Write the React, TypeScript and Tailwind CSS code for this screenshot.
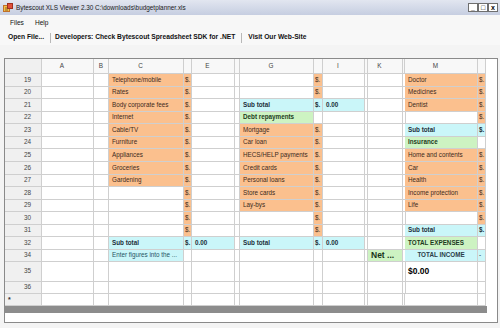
import React from "react";

type Cell = { t?: string; k?: "o" | "c" | "g"; b?: boolean; x?: string };
type Row = { n: string; h: string; cells: Record<string, Cell> };

const COLS = ["A", "B", "C", "D", "E", "F", "G", "H", "I", "J", "K", "L", "M", "N"];
const NARROW = ["D", "F", "H", "J", "L", "N"];
const GRID =
  "grid grid-cols-[37px_52px_15px_75px_8px_43px_5px_74px_9px_42px_3px_35px_2px_73px_8px]";

const o = (t = ""): Cell => ({ t, k: "o" });
const cb = (t = ""): Cell => ({ t, k: "c", b: true });
const gb = (t = ""): Cell => ({ t, k: "g", b: true });
const d = o("$.");

const tone = {
  o: "bg-[#fbc08e] text-[#3b2a1c]",
  c: "bg-[#caf6f9] text-[#1c2f3a]",
  g: "bg-[#cdf3c2] text-[#1c3a1c]",
};

const rows: Row[] = [
  { n: "19", h: "h-[12.57px]", cells: { C: o("Telephone/mobile"), D: d, H: d, M: o("Doctor"), N: d } },
  { n: "20", h: "h-[12.57px]", cells: { C: o("Rates"), D: d, H: d, M: o("Medicines"), N: d } },
  {
    n: "21",
    h: "h-[12.57px]",
    cells: { C: o("Body corporate fees"), D: d, G: cb("Sub total"), H: cb("$."), I: cb("0.00"), M: o("Dentist"), N: d },
  },
  { n: "22", h: "h-[12.57px]", cells: { C: o("Internet"), D: d, G: gb("Debt repayments"), N: d } },
  {
    n: "23",
    h: "h-[12.57px]",
    cells: { C: o("Cable/TV"), D: d, G: o("Mortgage"), H: d, M: cb("Sub total"), N: cb("$.") },
  },
  { n: "24", h: "h-[12.57px]", cells: { C: o("Furniture"), D: d, G: o("Car loan"), H: d, M: gb("Insurance") } },
  {
    n: "25",
    h: "h-[12.57px]",
    cells: { C: o("Appliances"), D: d, G: o("HECS/HELP payments"), H: d, M: o("Home and contents"), N: d },
  },
  { n: "26", h: "h-[12.57px]", cells: { C: o("Groceries"), D: d, G: o("Credit cards"), H: d, M: o("Car"), N: d } },
  { n: "27", h: "h-[12.57px]", cells: { C: o("Gardening"), D: d, G: o("Personal loans"), H: d, M: o("Health"), N: d } },
  { n: "28", h: "h-[12.57px]", cells: { D: d, G: o("Store cards"), H: d, M: o("Income protection"), N: d } },
  { n: "29", h: "h-[12.57px]", cells: { D: d, G: o("Lay-bys"), H: d, M: o("Life"), N: d } },
  { n: "30", h: "h-[12.57px]", cells: { D: d, H: d, N: d } },
  { n: "31", h: "h-[12.57px]", cells: { D: d, H: d, M: cb("Sub total"), N: cb("$.") } },
  {
    n: "32",
    h: "h-[12.57px]",
    cells: {
      C: cb("Sub total"),
      D: cb("$."),
      E: cb("0.00"),
      G: cb("Sub total"),
      H: cb("$."),
      I: cb("0.00"),
      M: gb("TOTAL EXPENSES"),
    },
  },
  {
    n: "34",
    h: "h-[12px]",
    cells: {
      C: { t: "Enter figures into the ...", k: "c", x: "text-[#1f5464]" },
      K: { t: "Net ...", k: "g", b: true, x: "text-[8.5px] text-[#173317]" },
      M: { t: "TOTAL INCOME", k: "c", b: true, x: "justify-center text-[#2a3d48]" },
      N: { t: "-", k: "c" },
    },
  },
  { n: "35", h: "h-[20px]", cells: { M: { t: "$0.00", b: true, x: "text-[8.5px] text-black" } } },
  { n: "36", h: "h-[12px]", cells: {} },
];

function TitleIcon() {
  return (
    <svg width="10" height="10" viewBox="0 0 10 10">
      <rect x="0.5" y="2.5" width="6" height="6" fill="#f3c14a" stroke="#c0702a" />
      <rect x="4.5" y="0.5" width="5" height="5" fill="#e0503a" stroke="#a0301e" />
      <path d="M2 5 L5 5 M2 7 L5 7" stroke="#7a4a1a" strokeWidth="0.8" />
    </svg>
  );
}

export default function App() {
  return (
    <div className="w-[500px] h-[328px] overflow-hidden bg-[#f4f4f4] flex flex-col font-['Liberation_Sans',Arial,sans-serif]">
      {/* title bar */}
      <div className="h-[15px] flex items-center bg-gradient-to-b from-[#e2e6f0] to-[#c6cee1] pl-[3px] pr-[2px]">
        <TitleIcon />
        <span className="ml-[3px] text-[6.4px] text-[#1a1a1a] whitespace-nowrap">
          Bytescout XLS Viewer 2.30 C:\downloads\budgetplanner.xls
        </span>
        <div className="ml-auto flex">
          {["_", "□", "x"].map((g) => (
            <div
              key={g}
              className="w-[10px] h-[9px] border border-[#6f6f6f] bg-white flex items-center justify-center text-[7px] font-bold leading-none text-black"
            >
              {g}
            </div>
          ))}
        </div>
      </div>

      {/* menu */}
      <div className="h-[15px] flex items-center gap-[11px] pl-[10px] text-[6.6px] text-[#111] bg-[#f7f7f7]">
        <span>Files</span>
        <span>Help</span>
      </div>

      {/* toolbar */}
      <div className="h-[15px] flex items-center pl-[8px] text-[6.7px] font-bold text-[#111] bg-[#f8f8f8] whitespace-nowrap">
        <span>Open File...</span>
        <div className="ml-[6px] mr-[4px] w-[1px] h-[10px] bg-[#b8b8b8]" />
        <span>Developers: Check Bytescout Spreadsheet SDK for .NET</span>
        <div className="ml-[6px] mr-[6px] w-[1px] h-[10px] bg-[#b8b8b8]" />
        <span>Visit Our Web-Site</span>
      </div>

      <div className="h-[13px]" />

      {/* grid */}
      <div className="ml-[4px] w-[494px] h-[265px] border border-[#8a8a8a] bg-white flex flex-col text-[6.3px] leading-none">
        <div className={`${GRID} h-[15px]`}>
          <div className="bg-[#f0f0f0] border-r border-b border-[#cfcfcf]" />
          {COLS.map((c) => (
            <div
              key={c}
              className={`bg-[#f8f8f8] border-r border-b border-[#cfcfcf] flex items-center justify-center text-[6.4px] text-[#444] ${
                NARROW.includes(c) || c === "B" ? "" : "pr-[11px]"
              }`}
            >
              {NARROW.includes(c) ? "" : c}
            </div>
          ))}
        </div>

        {rows.map((r) => (
          <div key={r.n} className={`${GRID} ${r.h}`}>
            <div className="bg-[#f0f0f0] border-r border-b border-[#cfcfcf] flex items-center justify-end pr-[10px] text-[6.4px] text-[#444]">
              {r.n}
            </div>
            {COLS.map((c) => {
              const cell = r.cells[c];
              const narrow = NARROW.includes(c);
              return (
                <div
                  key={c}
                  className={`border-r border-b border-[#cfcfcf] flex items-center overflow-hidden whitespace-nowrap ${
                    narrow ? "px-[1px]" : "px-[3px]"
                  } ${cell?.k ? tone[cell.k] : "text-[#222]"} ${cell?.b ? "font-bold" : ""} ${cell?.x ?? ""}`}
                >
                  {cell?.t}
                </div>
              );
            })}
          </div>
        ))}

        <div className={`${GRID} h-[12px]`}>
          <div className="bg-[#f0f0f0] border-r border-b border-[#cfcfcf] flex items-center pl-[3px] text-[7px] font-bold text-[#333]">
            *
          </div>
          {COLS.map((c) => (
            <div key={c} className="border-r border-b border-[#cfcfcf]" />
          ))}
        </div>

        <div className="h-[7px] w-[482px] bg-[#8c8c8c]" />
      </div>
    </div>
  );
}
